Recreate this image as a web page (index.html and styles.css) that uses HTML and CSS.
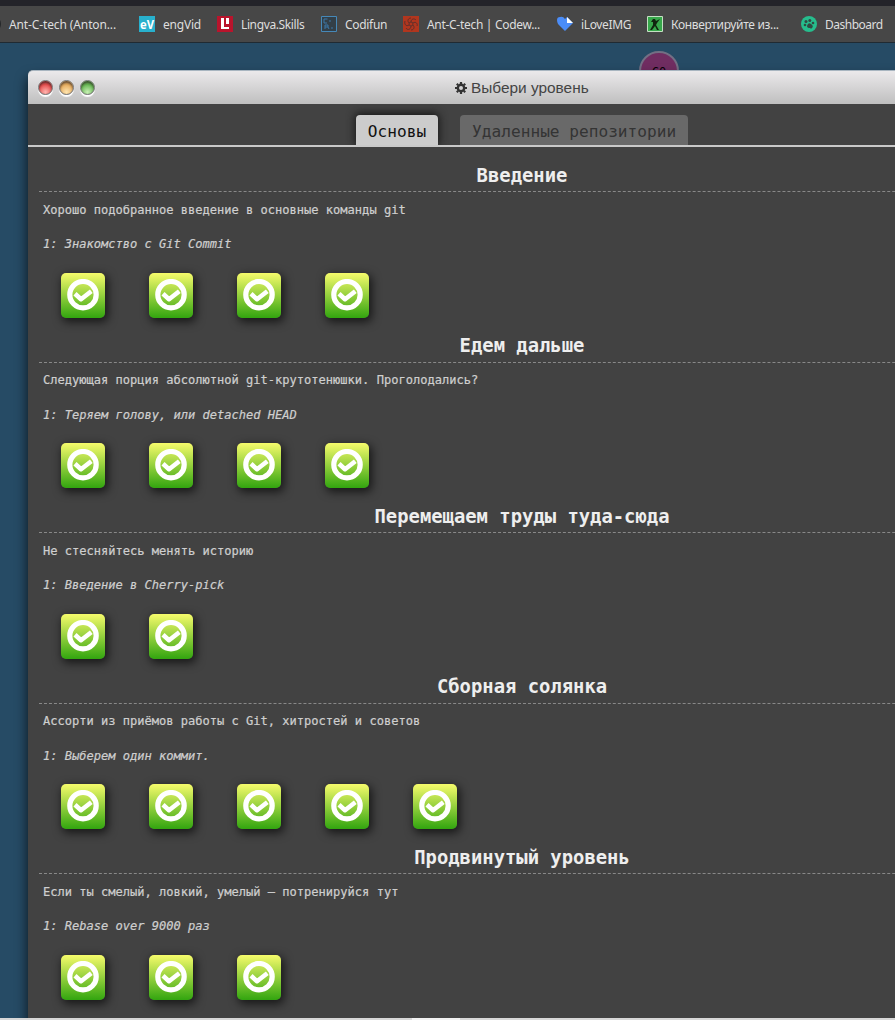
FILE: index.html
```html
<!DOCTYPE html>
<html lang="ru">
<head>
<meta charset="utf-8">
<title>Выбери уровень</title>
<link rel="stylesheet" href="styles.css">
</head>
<body>
<svg class="defs" width="0" height="0"><symbol id="check" viewBox="0 0 32 32"><circle cx="16" cy="15.700" r="13.200" fill="none" stroke="#fff" stroke-width="5.200"/><path d="M8 14.800l6 5.400L24.300 12.200" fill="none" stroke="#fff" stroke-width="4.600" stroke-linejoin="round"/></symbol></svg>
<header class="bookmarks">
  <span class="edge-icon"></span>
  <a class="bm" style="--x:9px;--s:-.12px"><span class="label">Ant-C-tech (Anton...</span></a>
  <a class="bm" style="--x:139px;--s:-.2px"><svg class="fav" viewBox="0 0 16 16"><path fill="#28b0cd" d="M0 0h16v16H0z"/><text x="1" y="12.500" class="ev" textLength="14" lengthAdjust="spacingAndGlyphs">eV</text></svg><span class="label">engVid</span></a>
  <a class="bm" style="--x:217px;--s:-.38px"><svg class="fav" viewBox="0 0 16 16"><path fill="#b9142c" d="M0 0h16v16H0z"/><path fill="#fff" d="M4 2h3v9h5v2H4zM9 2h3v6H9z"/></svg><span class="label">Lingva.Skills</span></a>
  <a class="bm" style="--x:321px;--s:-.3px"><svg class="fav" viewBox="0 0 16 16"><path d="M.5.5h15v15H.5z" fill="#333f48" stroke="#4688b8"/><path d="M6.500 3H3v4h3M8 5h2M4 13V9h3v2H4m3 0 1 2M10 12h2" fill="none" stroke="#3c79a8"/></svg><span class="label">Codifun</span></a>
  <a class="bm" style="--x:403px;--s:-.3px"><svg class="fav" viewBox="0 0 16 16"><path fill="#b1361e" d="M0 0h16v16H0z"/><g fill="none" stroke="#60302b"><circle cx="8" cy="8" r="2"/><path d="M8 6c0-3 3-4 5-2M10 7c3-2 5 1 4 3M10 9c2 2 1 5-2 5M8 10c0 3-3 5-5 2M6 9c-3 2-5-1-4-4M6 7C4 5 5 2 8 2"/></g></svg><span class="label">Ant-C-tech | Codew...</span></a>
  <a class="bm" style="--x:557px;--s:-.35px"><svg class="fav" viewBox="0 0 16 16"><path fill="#4b8df8" d="M0 4q0-3 3-3 3-1 5 2l2-2 6 6-8 8-7-7Q0 6 0 4z"/><path fill="#fff" d="M10 1l6 6h-6z"/></svg><span class="label">iLoveIMG</span></a>
  <a class="bm" style="--x:647px;--s:-.33px"><svg class="fav" viewBox="0 0 16 16"><path fill="#37a84b" stroke="#c4e0c3" d="M.5.5h15v15H.5z"/><path fill="#10250f" d="M6 3l2 0 1 2 4-2-3 4-1 2 3 5h-2L8 10l-3 4H3l3-5V6L4 6z"/></svg><span class="label">Конвертируйте из...</span></a>
  <a class="bm" style="--x:801px;--s:-.5px"><svg class="fav" viewBox="0 0 16 16"><circle cx="8" cy="8" r="8" fill="#26bd8d"/><g fill="#314b43"><circle cx="4" cy="9" r="1.300"/><circle cx="5" cy="5.500" r="1.500"/><circle cx="8.800" cy="4.500" r="1.500"/><circle cx="12" cy="7" r="1.300"/><path d="M6 10q1-4 4-2 3 2 1 4-1 1-2 0-3 0-3-2z"/></g></svg><span class="label">Dashboard</span></a>
</header>
<main class="canvas">
  <div class="commit">C0</div>
  <section class="window">
    <div class="titlebar"><div class="lights"><i class="red"></i><i class="amber"></i><i class="green"></i></div>
      <svg class="gear" viewBox="0 0 12 12"><circle cx="6" cy="6" r="3.200" fill="none" stroke="#333" stroke-width="2.400"/><path d="M6 0v2M6 10v2M0 6h2M10 6h2M1.800 1.800l1.400 1.400M8.800 8.800l1.400 1.400M1.800 10.200l1.400-1.400M8.800 3.200l1.400-1.400" stroke="#333" stroke-width="2.200"/></svg><span class="title">Выбери уровень</span></div>
    <nav class="tabs"><a class="tab active">Основы</a><a class="tab">Удаленные репозитории</a></nav>
    <div class="levels" id="levels"></div>
  </section>
</main>
<footer class="taskbar"><span></span></footer>
<script src="levels.js"></script>
</body>
</html>
```
FILE: styles.css
```css
* { box-sizing: border-box; }
body { margin: 0; width: 895px; height: 1020px; overflow: hidden; background: #264b65; font-family: "DejaVu Sans Mono", monospace; display: flex; flex-direction: column; }
.defs { position: absolute; }
.bookmarks { height: 43px; flex: none; border-top: 6px solid #232329; border-bottom: 1px solid #202a32; background: #474747; display: grid; align-items: center; overflow: hidden; font: 12px "Noto Sans", "Open Sans", sans-serif; color: #dedede; }
.bm, .edge-icon { grid-area: 1 / 1; }
.bm { margin-left: var(--x); letter-spacing: var(--s); display: flex; align-items: center; gap: 8px; white-space: nowrap; }
.fav { width: 16px; height: 16px; flex: none; overflow: visible; letter-spacing: 0; }
.ev { font: bold 12px "Open Sans", sans-serif; fill: #fff; }
.edge-icon { width: 8px; height: 12px; margin-left: -7px; border-radius: 50%; background: #25282a; }
.canvas { position: relative; height: 975px; flex: none; padding: 27px 0 0 28px; overflow: hidden; }
.commit { position: absolute; left: 639px; top: 8px; width: 40px; height: 40px; border: 2px solid #736f84; border-radius: 50%; background: #702d61; color: #050005; text-align: center; font-size: 12px; line-height: 38px; }
.window { position: relative; width: 988px; height: 960px; background: #424242; border-radius: 5px 5px 0 0; box-shadow: 0 8px 12px 1px rgba(0,0,0,.65); }
.titlebar { height: 34px; border-radius: 5px 5px 0 0; border-top: 1px solid #a8b5c0; background: linear-gradient(#ebe9eb, #bfbfbf); display: flex; align-items: center; justify-content: center; gap: 4px; position: relative; color: #444; font: 15.400px "Liberation Sans", sans-serif; }
.title { width: 118px; white-space: nowrap; }
.gear { width: 12px; height: 12px; }
.lights { position: absolute; left: 10px; top: 9px; display: flex; gap: 6px; }
.lights i { width: 15px; height: 15px; border-radius: 50%; border: 1px solid #777; box-shadow: 0 2px 1px #fff, inset 0 2px 2px rgba(40,30,30,.65); }
.red { background: radial-gradient(circle at 50% 85%, #ffb6b0, #e44b4b 60%); }
.amber { background: radial-gradient(circle at 50% 85%, #ffe5b0, #e4aa5c 60%); }
.green { background: radial-gradient(circle at 50% 85%, #c8f0b5, #65b552 60%); }
.tabs { height: 43px; border-bottom: 2px solid #c9c9c9; display: flex; justify-content: center; align-items: flex-end; gap: 22px; }
.tab { height: 30px; border-radius: 4px 4px 0 0; padding: 0 12px; background: #696969; color: #343434; font-size: 16.150px; line-height: 33px; white-space: nowrap; }
.active { background: #ccc; color: #111; box-shadow: 0 -1px 9px 1px #171717; clip-path: inset(-15px -15px 0); }
.levels { padding: 13.750px 11px 0; }
.sequence { height: 170.500px; }
.sequence h2 { height: 31.250px; margin: 0; border-bottom: 1px dashed #888; text-align: center; color: #eee; font-size: 18.850px; line-height: 29px; }
.sequence p { margin: 0; padding-left: 4px; color: #cfcfcf; font-size: 12.060px; line-height: 18px; white-space: nowrap; -webkit-text-stroke: .2px #cfcfcf; }
.sequence .about { padding-top: 8.750px; height: 26.750px; }
.sequence .current { margin-top: 16.250px; height: 18px; font-style: italic; }
.icons { display: flex; gap: 44px; padding: 19.750px 0 0 22px; }
.level { width: 44px; height: 45px; border-radius: 5px; background: linear-gradient(#f6fb6b, #32a50f); box-shadow: 2px 3px 10px 1px rgba(0,0,0,.65); padding: 6px; }
.level svg { display: block; width: 32px; height: 32px; }
.taskbar { height: 2px; flex: none; background: #d7d7d7; display: flex; padding-left: 412px; }
.taskbar span { width: 48px; background: #f1f1f1; }
```
FILE: levels.js
```js
const sequences = [
  ["Введение", "Хорошо подобранное введение в основные команды git", "1: Знакомство с Git Commit", 4],
  ["Едем дальше", "Следующая порция абсолютной git-крутотенюшки. Проголодались?", "1: Теряем голову, или detached HEAD", 4],
  ["Перемещаем труды туда-сюда", "Не стесняйтесь менять историю", "1: Введение в Cherry-pick", 2],
  ["Сборная солянка", "Ассорти из приёмов работы с Git, хитростей и советов", "1: Выберем один коммит.", 5],
  ["Продвинутый уровень", "Если ты смелый, ловкий, умелый – потренируйся тут", "1: Rebase over 9000 раз", 3]
];
const icon = '<div class="level"><svg><use href="#check"/></svg></div>';
document.getElementById("levels").innerHTML = sequences.map(([name, about, current, count]) =>
  `<section class="sequence"><h2>${name}</h2><p class="about">${about}</p><p class="current">${current}</p><div class="icons">${icon.repeat(count)}</div></section>`
).join("");
```
